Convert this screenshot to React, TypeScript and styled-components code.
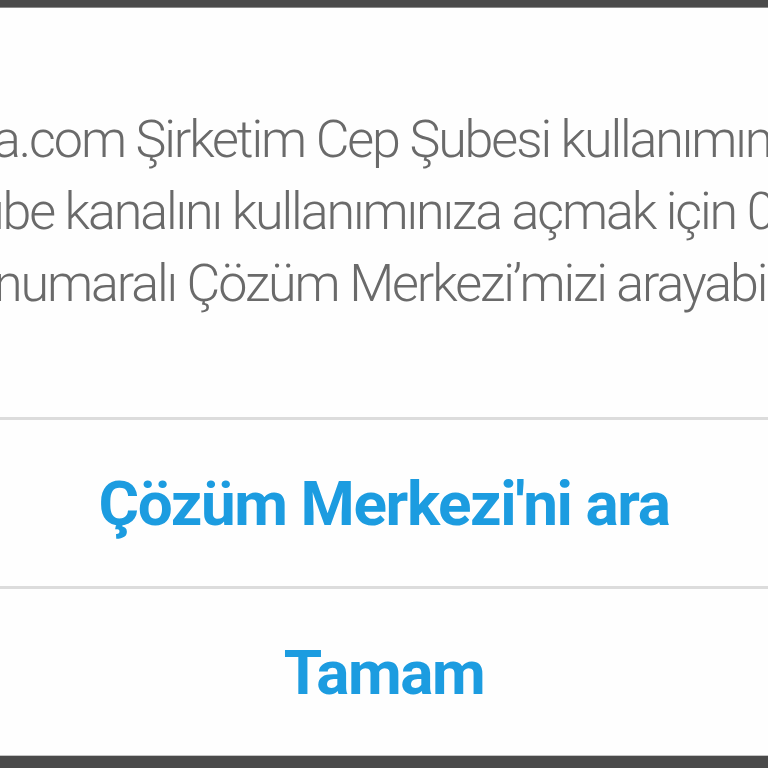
import React from "react";
import styled, { createGlobalStyle } from "styled-components";

const Global = createGlobalStyle`
  html, body { margin: 0; padding: 0; background: #4a4a4a; }
  body { width: 768px; height: 768px; overflow: hidden; }
  #root { width: 768px; height: 768px; }
`;

const Frame = styled.div`
  width: 768px;
  height: 768px;
  display: flex;
  flex-direction: column;
  background: #4a4a4a;
  overflow: hidden;
`;

const Dialog = styled.div`
  margin-top: 7px;
  height: 749px;
  display: flex;
  flex-direction: column;
  background: #fefefe;
  border-top: 1px solid #8a8a8a;
  border-bottom: 1px solid #c4c4c4;
  box-sizing: border-box;
  overflow: hidden;
`;

const Message = styled.div`
  height: 409px;
  display: flex;
  flex-direction: column;
  justify-content: center;
  box-sizing: border-box;
  padding-bottom: 2px;
`;

const Line = styled.div<{ $indent: number }>`
  margin-left: ${(p) => p.$indent}px;
  white-space: nowrap;
  font-family: Roboto, "Noto Sans", sans-serif;
  font-weight: 300;
  font-size: 52px;
  line-height: 72px;
  letter-spacing: -2.1px;
  color: #6a6a6a;
`;

const Divider = styled.div`
  height: 3px;
  background: #dcdcdc;
  flex-shrink: 0;
`;

const Action = styled.button`
  flex: 1;
  border: none;
  background: transparent;
  display: flex;
  align-items: center;
  justify-content: center;
  padding: 0;
  font-family: Roboto, "Noto Sans", sans-serif;
  font-weight: 700;
  font-size: 62px;
  letter-spacing: -1.4px;
  color: #1c9ce0;
  cursor: pointer;
`;

export default function App() {
  return (
    <>
      <Global />
      <Frame>
        <Dialog>
          <Message>
            <Line $indent={-7}>a.com Şirketim Cep Şubesi kullanımınız kapalıdır.</Line>
            <Line $indent={-24}>ube kanalını kullanımınıza açmak için 0 850 222 0 532</Line>
            <Line $indent={-6}>numaralı Çözüm Merkezi’mizi arayabilirsiniz.</Line>
          </Message>
          <Divider />
          <Action>Çözüm Merkezi'ni ara</Action>
          <Divider />
          <Action>Tamam</Action>
        </Dialog>
      </Frame>
    </>
  );
}
